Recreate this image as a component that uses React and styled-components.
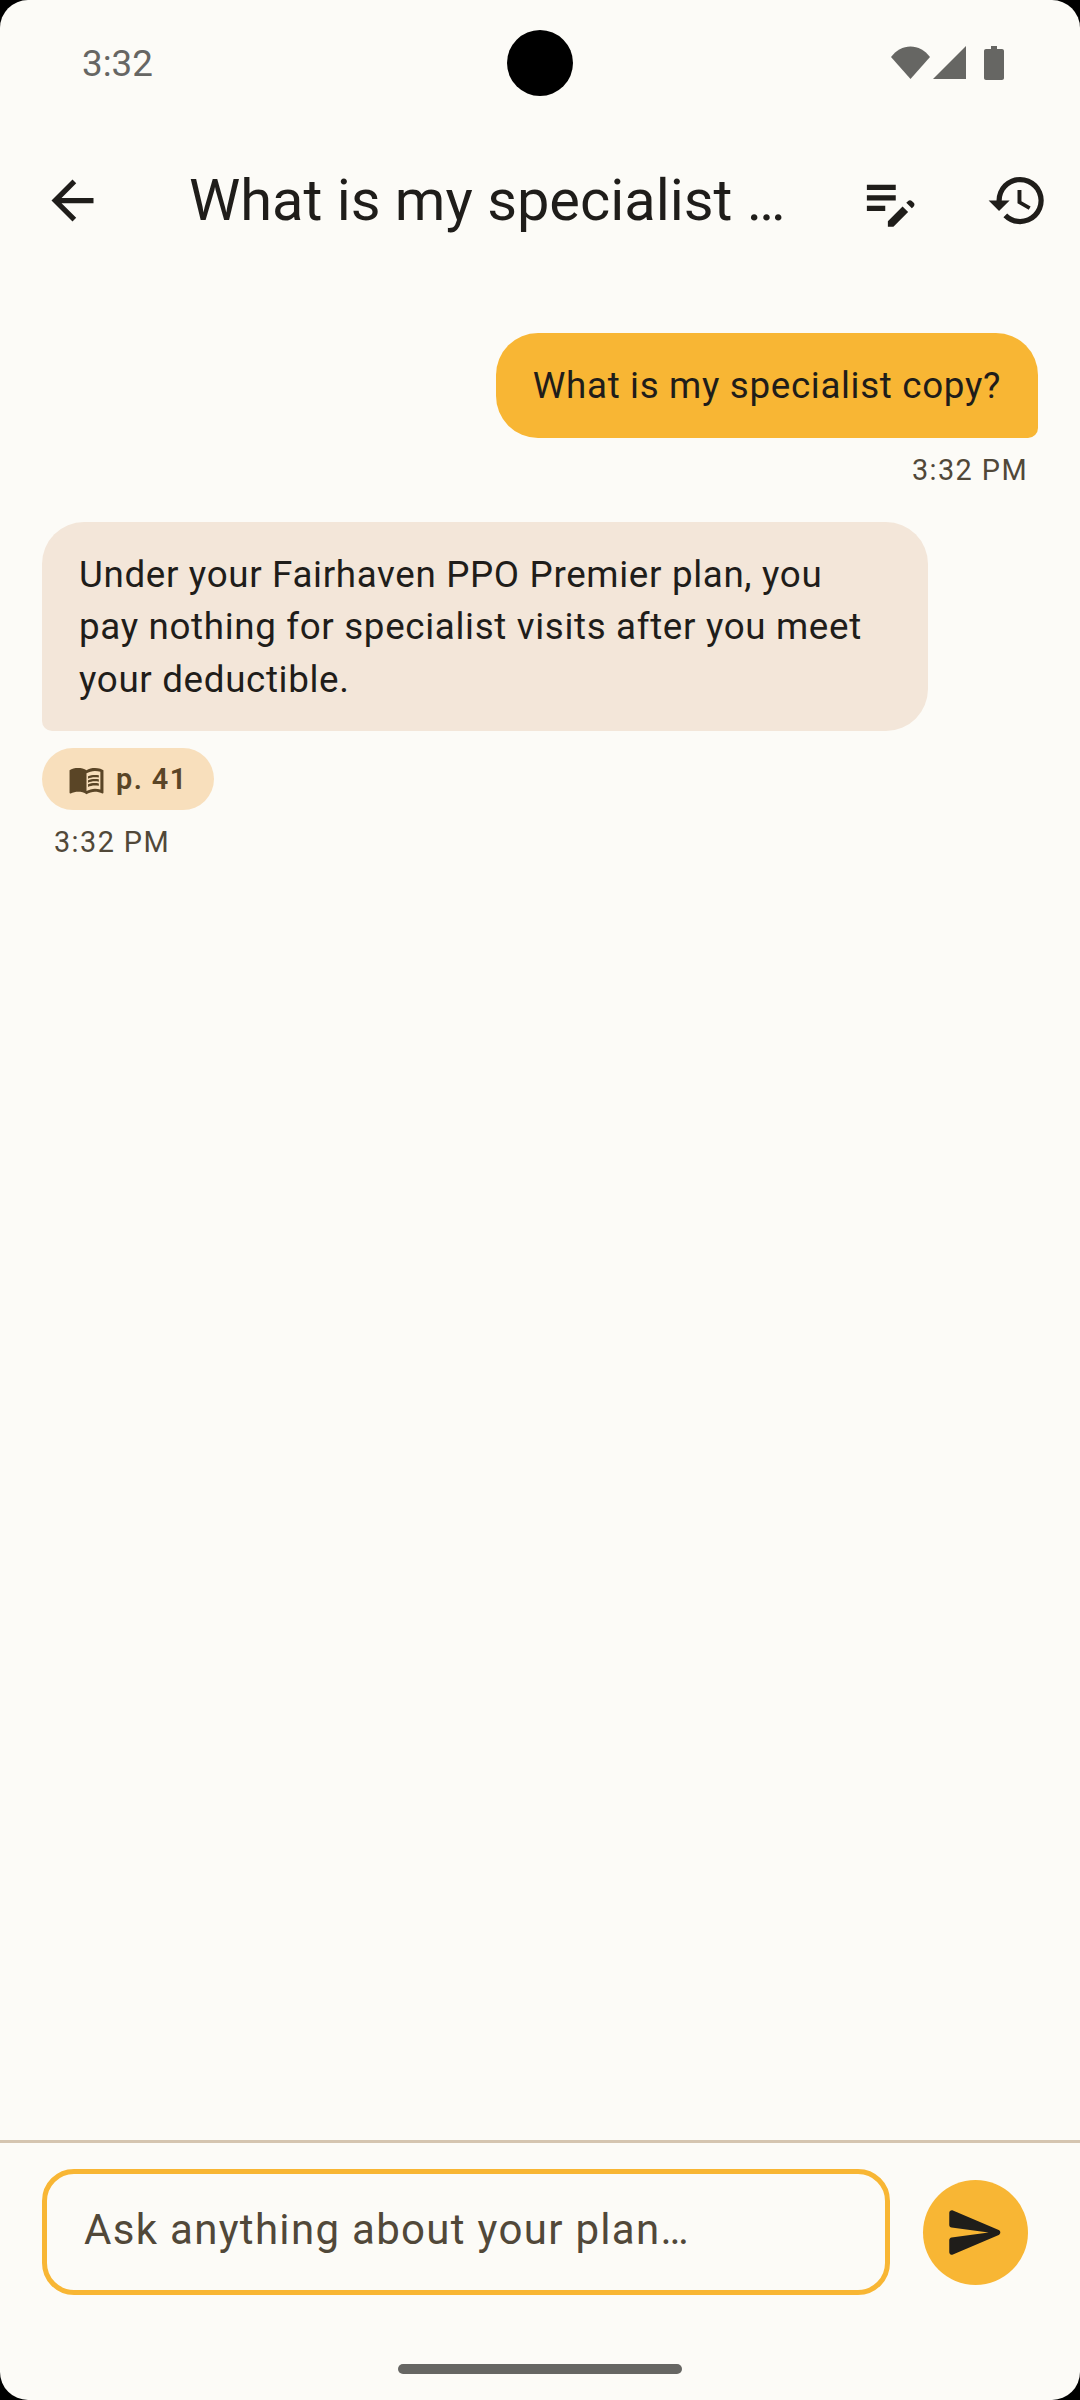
import styled, { createGlobalStyle } from 'styled-components';

const GlobalStyle = createGlobalStyle`
  html, body {
    margin: 0;
    background: #000;
  }
  * {
    box-sizing: border-box;
  }
`;

const colors = {
  page: '#fcfbf7',
  amber: '#f8b634',
  ink: '#1f1d1a',
  muted: '#514839',
  chip: '#f8dfbc',
  chipInk: '#5a4526',
  assistant: '#f3e6d9',
  line: '#d5c5b0',
  system: '#666663',
};

const Screen = styled.div`
  width: 1080px;
  height: 2400px;
  display: flex;
  flex-direction: column;
  overflow: hidden;
  border-radius: 28px;
  background: ${colors.page};
  color: ${colors.ink};
  font-family: Roboto, 'Noto Sans', sans-serif;
`;

const StatusBar = styled.div`
  height: 126px;
  flex: none;
  display: grid;
  grid-template-columns: 1fr 66px 1fr;
  align-items: center;
  padding: 0 75px;
`;

const Clock = styled.span`
  margin-left: 7px;
  font-size: 36.75px;
  font-weight: 400;
  color: ${colors.system};
`;

const Camera = styled.div`
  width: 66px;
  height: 66px;
  border-radius: 50%;
  background: #000;
`;

const StatusIcons = styled.div`
  display: flex;
  justify-content: flex-end;
  align-items: center;
`;

const Header = styled.header`
  height: 148px;
  flex: none;
  display: flex;
  align-items: center;
  padding: 0 31px 0 41px;
`;

const Title = styled.h1`
  flex: 1;
  margin: 0 0 0 85px;
  font-size: 57.75px;
  font-weight: 400;
  white-space: nowrap;
`;

const IconButton = styled.button`
  display: flex;
  padding: 0;
  border: 0;
  background: none;
  color: ${colors.ink};
  margin-left: ${(props) => props.$gap || 0}px;
`;

const Messages = styled.main`
  flex: 1;
  display: flex;
  flex-direction: column;
  padding: 59px 42px 0;
`;

const Bubble = styled.div`
  padding: 27px 37px 25px;
  font-size: 36.75px;
  line-height: 52.5px;
  letter-spacing: 0.66px;
  border-radius: ${(props) => (props.$mine ? '42px 42px 10px 42px' : '42px 42px 42px 10px')};
  background: ${(props) => (props.$mine ? colors.amber : colors.assistant)};
  align-self: ${(props) => (props.$mine ? 'flex-end' : 'flex-start')};
  width: ${(props) => (props.$mine ? 'auto' : '886px')};
`;

const Time = styled.div`
  margin: 11px 10px 0 12px;
  font-size: 28.875px;
  line-height: 42px;
  font-weight: 450;
  letter-spacing: 1.4px;
  color: ${colors.muted};
  align-self: ${(props) => (props.$mine ? 'flex-end' : 'flex-start')};
  margin-bottom: ${(props) => (props.$mine ? 31 : 0)}px;
`;

const SourceChip = styled.button`
  align-self: flex-start;
  height: 62px;
  margin-top: 17px;
  padding: 0 26px;
  display: flex;
  align-items: center;
  gap: 11px;
  border: 0;
  border-radius: 31px;
  background: ${colors.chip};
  color: ${colors.chipInk};
  font-family: inherit;
  font-size: 28.875px;
  font-weight: 600;
  letter-spacing: 1.4px;
`;

const Composer = styled.form`
  flex: none;
  display: flex;
  align-items: center;
  gap: 33px;
  margin: 0;
  padding: 26px 52px 0 42px;
  border-top: 3px solid ${colors.line};
`;

const PromptInput = styled.input`
  flex: 1;
  min-width: 0;
  height: 126px;
  padding: 0 37px 6px;
  border: 5px solid ${colors.amber};
  border-radius: 32px;
  outline: 0;
  background: transparent;
  font-family: inherit;
  font-size: 42px;
  letter-spacing: 1.31px;
  color: ${colors.muted};

  &::placeholder {
    color: ${colors.muted};
    opacity: 1;
  }
`;

const SendButton = styled.button`
  width: 105px;
  height: 105px;
  flex: none;
  display: flex;
  align-items: center;
  justify-content: center;
  padding: 0;
  border: 0;
  border-radius: 50%;
  background: ${colors.amber};
  color: ${colors.ink};
`;

const Gesture = styled.div`
  height: 105px;
  flex: none;
  display: flex;
  justify-content: center;
  padding-top: 69px;
`;

const GesturePill = styled.div`
  width: 284px;
  height: 10px;
  border-radius: 5px;
  background: ${colors.system};
`;

const Icon = ({ d, size = 63 }) => (
  <svg width={size} height={size} viewBox="0 0 24 24" fill="currentColor">
    <path d={d} />
  </svg>
);

const paths = {
  back: 'M20 11H7.83l5.59-5.59L12 4l-8 8 8 8 1.41-1.41L7.83 13H20v-2z',
  editNote:
    'M3 10h11v2H3v-2zm0-2h11V6H3v2zm0 8h7v-2H3v2zm15.01-3.13.71-.71c.39-.39 1.02-.39 1.41 0l.71.71c.39.39.39 1.02 0 1.41l-.71.71-2.12-2.12zm-1.42 1.42L11 19.88V22h2.12l5.59-5.59-2.12-2.12z',
  history:
    'M13 3a9 9 0 0 0-9 9H1l3.89 3.89.07.14L9 12H6c0-3.87 3.13-7 7-7s7 3.13 7 7-3.13 7-7 7c-1.93 0-3.68-.79-4.94-2.06l-1.42 1.42A8.954 8.954 0 0 0 13 21a9 9 0 0 0 0-18zm-1 5v5l4.28 2.54.72-1.21-3.5-2.08V8H12z',
  book: 'M21 5c-1.11-.35-2.33-.5-3.5-.5-1.95 0-4.05.4-5.5 1.5-1.45-1.1-3.55-1.5-5.5-1.5S2.45 4.9 1 6v14.65c0 .25.25.5.5.5.1 0 .15-.05.25-.05C3.1 20.45 5.05 20 6.5 20c1.95 0 4.05.4 5.5 1.5 1.35-.85 3.8-1.5 5.5-1.5 1.65 0 3.35.3 4.75 1.05.1.05.15.05.25.05.25 0 .5-.25.5-.5V6c-.6-.45-1.25-.75-2-1zm0 13.5c-1.1-.35-2.3-.5-3.5-.5-1.7 0-4.15.65-5.5 1.5V8c1.35-.85 3.8-1.5 5.5-1.5 1.2 0 2.4.15 3.5.5v11.5zM17.5 10.5c.88 0 1.73.09 2.5.26V9.24c-.79-.15-1.64-.24-2.5-.24-1.7 0-3.24.29-4.5.83v1.66c1.13-.64 2.7-.99 4.5-.99zM13 12.49v1.66c1.13-.64 2.7-.99 4.5-.99.88 0 1.73.09 2.5.26V11.9c-.79-.15-1.64-.24-2.5-.24-1.7 0-3.24.3-4.5.83zm4.5 1.84c-1.7 0-3.24.29-4.5.83v1.66c1.13-.64 2.7-.99 4.5-.99.88 0 1.73.09 2.5.26v-1.52c-.79-.16-1.64-.24-2.5-.24z',
  send: 'M3.4 20.4l17.45-7.48c.81-.35.81-1.49 0-1.84L3.4 3.6c-.66-.29-1.39.2-1.39.91L2 9.12c0 .5.37.93.87.99L17 12 2.87 13.88c-.5.07-.87.5-.87 1l.01 4.61c0 .71.73 1.2 1.39.91z',
};

const SystemIcons = () => (
  <svg width="114" height="34" viewBox="0 0 114 34" fill={colors.system}>
    <path d="M0 11C5 4.500 12 0.500 19.500 0.500S34 4.500 39 11L19.500 33z" />
    <path d="M42 33L75 0v33z" />
    <path d="M100 0h6v3h5c1.100 0 2 .9 2 2v27c0 1.100-.9 2-2 2H95c-1.100 0-2-.9-2-2V5c0-1.100.9-2 2-2h5z" />
  </svg>
);

export default function App() {
  return (
    <>
      <GlobalStyle />
      <Screen>
        <StatusBar>
          <Clock>3:32</Clock>
          <Camera />
          <StatusIcons>
            <SystemIcons />
          </StatusIcons>
        </StatusBar>
        <Header>
          <IconButton>
            <Icon d={paths.back} />
          </IconButton>
          <Title>What is my specialist …</Title>
          <IconButton>
            <Icon d={paths.editNote} />
          </IconButton>
          <IconButton $gap={64}>
            <Icon d={paths.history} />
          </IconButton>
        </Header>
        <Messages>
          <Bubble $mine>What is my specialist copy?</Bubble>
          <Time $mine>3:32 PM</Time>
          <Bubble>
            Under your Fairhaven PPO Premier plan, you pay nothing for specialist visits after you
            meet your deductible.
          </Bubble>
          <SourceChip>
            <Icon d={paths.book} size={37} />
            p. 41
          </SourceChip>
          <Time>3:32 PM</Time>
        </Messages>
        <Composer>
          <PromptInput placeholder="Ask anything about your plan…" />
          <SendButton type="button">
            <Icon d={paths.send} />
          </SendButton>
        </Composer>
        <Gesture>
          <GesturePill />
        </Gesture>
      </Screen>
    </>
  );
}
